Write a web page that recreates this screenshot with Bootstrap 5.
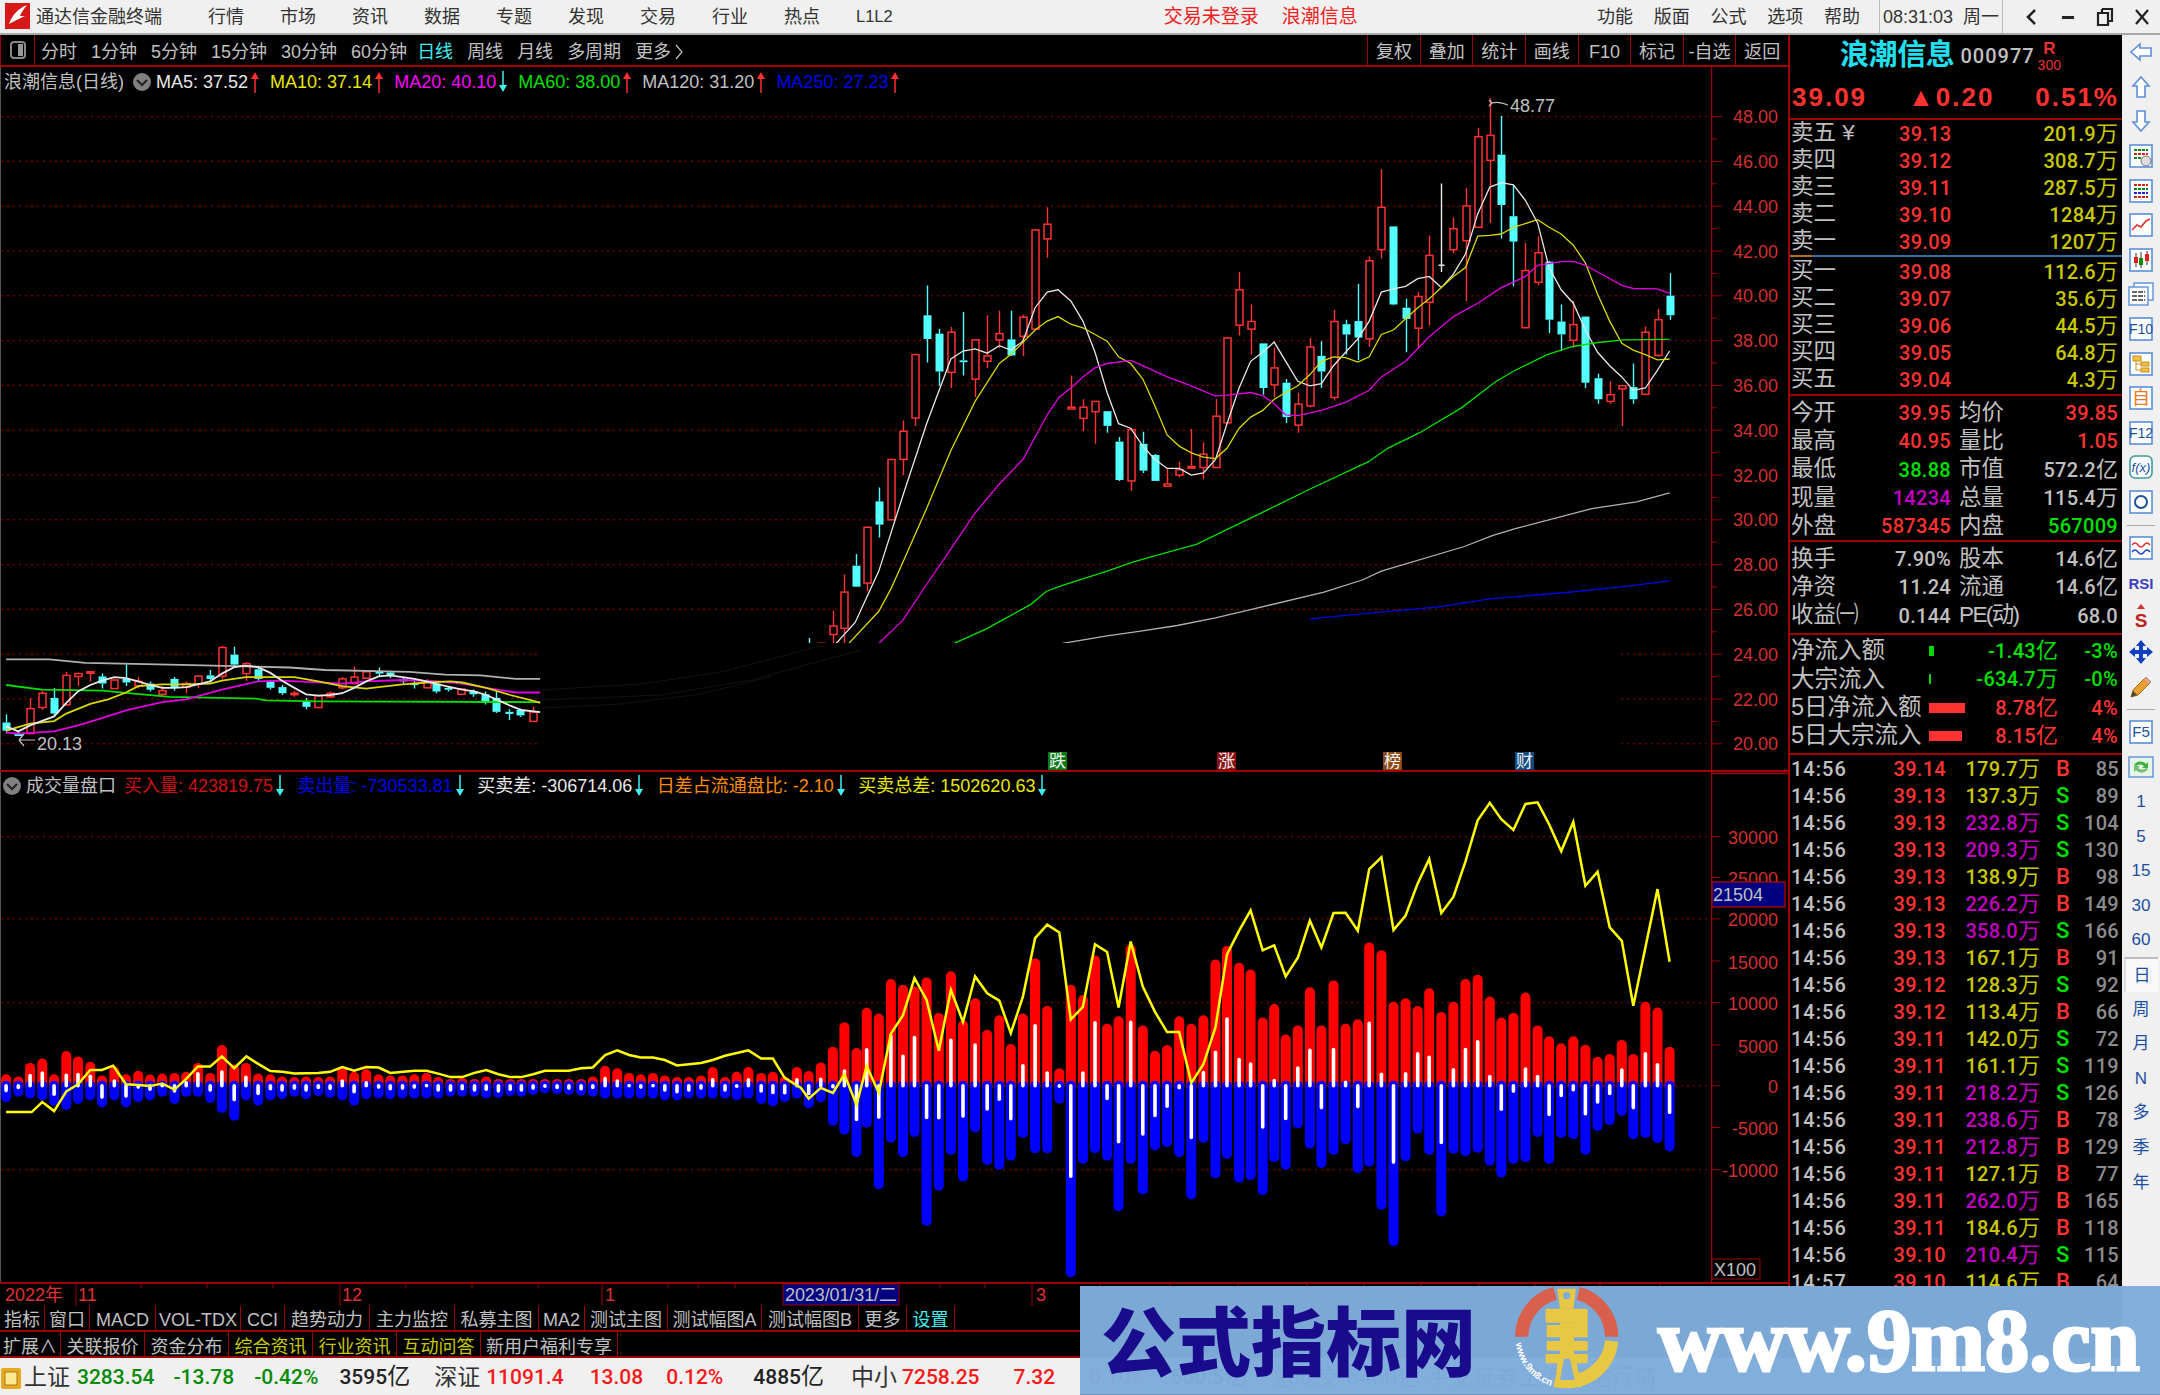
<!DOCTYPE html>
<html lang="zh-CN">
<head>
    <meta charset="UTF-8" />
    <title>通达信金融终端</title>
    <link href="https://cdn.jsdelivr.net/npm/bootstrap@5.3.3/dist/css/bootstrap.min.css" rel="stylesheet" />
    <style>
        body { background: #000; font-family: "Liberation Sans", "Noto Sans CJK SC", sans-serif; font-size: 18px; line-height: 1; color: #c0c0c0; }
        svg { display: block; }
        svg text { font-family: "Liberation Sans", "Noto Sans CJK SC", sans-serif; }

        .titlebar { height: 35px; background: #f0f0f0; border-bottom: 2px solid #a8a8a8; color: #333; flex: none; }
        .appname { margin-left: 6px; }
        .topmenu { margin-left: 46px; gap: 36px; }
        .l1l2 { font-size: 16.5px; }
        .tradeinfo { margin-left: 271px; gap: 23px; color: #f02020; font-size: 19px; }
        .rightmenu { gap: 20.75px; }
        .clockbox { height: 33px; margin-left: 19px; padding: 0 3px; border-left: 1px solid #bbb; border-right: 1px solid #bbb; gap: 10px; }
        .winbox { margin-left: 9px; }
        .winbtn { width: 37px; }

        .mainrow { height: 1323px; flex: none; }
        .chartcol { width: 1788px; flex: none; }
        .toolstrip { height: 32px; border-bottom: 2px solid #a00000; flex: none; }
        .toolicon { width: 35px; height: 30px; border-left: 1px solid #a00000; border-right: 1px solid #a00000; }
        .periods { margin-left: 6px; gap: 14px; padding-top: 3px; }
        .periodcur { margin-left: -4px; }
        .toolcell { width: 52.6px; height: 30px; padding-top: 3px; border-left: 1px solid #a00000; }
        .upperpane { height: 705px; border-bottom: 2px solid #a00000; flex: none; }
        .lowerpane { height: 510px; flex: none; }
        .plotcol { width: 1711px; flex: none; border-left: 1px solid #555; }
        .legend { height: 29px; padding-left: 3px; flex: none; }
        .legend2 { height: 28px; padding-left: 1px; flex: none; }
        .legendtxt { white-space: nowrap; }
        .legendmark { margin: 0 11px 0 3px; flex: none; }
        .legend2 .legendmark { margin-right: 13.5px; }
        .tabrow { height: 26px; border-bottom: 2px solid #a00000; flex: none; }
        .tabcell { height: 24px; padding-top: 3px; border-right: 1px solid #a00000; white-space: nowrap; }
        #tabs2 .tabcell { padding-top: 5px; }

        .quotecol { width: 334px; flex: none; border-left: 2px solid #a00000; }
        .qhead { height: 41px; padding-left: 50px; }
        .qname { color: #20e0f0; font-size: 29px; font-weight: 700; letter-spacing: -.4px; }
        .qcode { margin-left: 6px; font-size: 20px; font-family: Roboto, sans-serif; font-weight: 500; letter-spacing: 1px; }
        .qflag { margin-left: 3px; color: #e83030; font-size: 14px; text-align: center; }
        .qflag b { display: block; font-size: 17px; margin-bottom: 1px; }
        .qprice { height: 44px; padding: 0 3px 0 2px; border-bottom: 2px solid #a00000; color: #ff3232; font-weight: 700; font-size: 26px; letter-spacing: 2px; }
        .qbook { height: 276px; border-bottom: 2px solid #a00000; }
        .qrow { height: 27px; }
        .qnum { font-family: Roboto, sans-serif; font-weight: 500; font-size: 20px; letter-spacing: .3px; white-space: nowrap; }
        .qlabel { font-size: 22.5px; white-space: nowrap; }
        .tightlabel { letter-spacing: -1.6px; }
        .uni { font-family: "Noto Sans CJK SC", sans-serif; font-weight: 400; font-size: 22px; letter-spacing: 0; line-height: 0; }
        .bookmid { height: 2px; margin: 0 0 1px; background: linear-gradient(90deg, #b07020 22px, #2a6fa8 22px); }
        .w108 { width: 108px; flex: none; }
        .w52 { width: 52px; flex: none; }
        .w160 { width: 160px; flex: none; }
        .qstat1 { height: 146px; padding-top: 3px; border-bottom: 2px solid #a00000; }
        .qstat2 { height: 93px; padding-top: 3px; border-bottom: 2px solid #a00000; }
        .qstat3 { height: 120px; padding-top: 2px; border-bottom: 2px solid #a00000; }
        .statrow { height: 28.3px; padding-left: 1px; padding-right: 4px; }
        .statgap { margin-left: 8px; }
        .flowlabel { width: 138px; flex: none; font-size: 23.5px; }
        .flowmid { width: 129px; flex: none; }
        .flowbar { display: block; height: 10px; flex: none; }
        .ticks { overflow: hidden; flex: 1 1 0; min-height: 0; }
        .tickrow { height: 27px; padding-left: 1px; flex: none; }
        .ticktime { width: 60px; flex: none; letter-spacing: 1px; }
        .tickprice { width: 95px; flex: none; }
        .tickvol { width: 94px; flex: none; }
        .tickbs { width: 15px; margin-left: 16px; flex: none; font-size: 22px; font-weight: 500; }
        .tickcnt { flex: 1 1 0; padding-right: 3px; color: #8c8c8c; }
        .bookpad { padding-left: 1px; padding-right: 4px; }

        .sidecol { width: 38px; flex: none; background: #f0f0f0; color: #1c4fa0; font-size: 17px; }
        .sideitem { height: 34.6px; flex: none; }
        .sidesep { height: 11.4px; flex: none; }
        .sidesep i { display: block; width: 28px; height: 1px; background: #aaa; }
        .sidecur { background: #f8f8f8; border-top: 2px solid #bbb; border-left: 2px solid #ddd; margin: 0 2px; }

        .statusbar { height: 37px; padding-top: 2px; background: #f0f0f0; color: #222; flex: none; }
        .st-name { font-size: 23px; color: #333; white-space: nowrap; }
        .st-num { font-family: Roboto, sans-serif; font-weight: 500; font-size: 21px; white-space: nowrap; }
        .st-num .uni { font-size: 23px; }
        .sg5 { margin-left: 5px; }
        .sg6 { margin-left: 6px; }
        .sg7 { margin-left: 7px; }
        .sg19 { margin-left: 19px; }
        .sg20 { margin-left: 20px; }
        .sg21 { margin-left: 21px; }
        .sg23 { margin-left: 23px; }
        .sg24 { margin-left: 24px; }
        .sg26 { margin-left: 26px; }
        .sg27 { margin-left: 27px; }
        .sg30 { margin-left: 30px; }
        .sg34 { margin-left: 34px; }

        .adbanner { position: absolute; left: 1080px; top: 1286px; right: 0; bottom: 0; background: rgba(127, 172, 219, .975); border-bottom: 1px solid #6f95be; }
        .adtitle { margin-left: 21px; margin-bottom: 5px; width: 371px; color: #1a0a8c; font-family: "Noto Sans CJK SC", sans-serif; font-weight: 900; font-size: 75px; white-space: nowrap; }
        .adlogo { margin-left: 8px; flex: none; }
        .adurl { margin-left: -2px; color: #fff; font-family: "Liberation Serif", serif; font-weight: 700; font-size: 88.5px; -webkit-text-stroke: 3px #fff; white-space: nowrap; }

        .c-gray { color: #c0c0c0; }
        .c-white { color: #e8e8e8; }
        .c-yellow { color: #e8e800; }
        .c-olive { color: #c8c800; }
        .c-magenta { color: #ff00ff; }
        .c-purple { color: #c000c0; }
        .c-green { color: #00e000; }
        .c-blue { color: #0000f0; }
        .c-red { color: #ff3232; }
        .c-dred { color: #d01010; }
        .c-orange { color: #ff8c00; }
        .c-cyan { color: #40f0f0; }
        .c-dgreen { color: #058a05; }
        .c-sred { color: #f81818; }
    </style>
</head>
<body class="overflow-hidden">
<div class="d-flex flex-column position-relative vh-100">

    <header class="titlebar d-flex align-items-center">
        <svg width="30" height="33" viewBox="0 0 30 33">
            <rect x="5" y="3" width="25" height="26" fill="#d81818" />
            <path d="M9 24 C12 15 19 8 27 5 C23 10 21 13 20 16 L25 16 C19 19 14 21 9 24Z" fill="#fff" />
        </svg>
        <span class="appname">通达信金融终端</span>
        <div class="topmenu d-flex align-items-center">
            <span>行情</span><span>市场</span><span>资讯</span><span>数据</span><span>专题</span>
            <span>发现</span><span>交易</span><span>行业</span><span>热点</span><span class="l1l2">L1L2</span>
        </div>
        <div class="tradeinfo d-flex"><span>交易未登录</span><span>浪潮信息</span></div>
        <div class="rightmenu d-flex ms-auto"><span>功能</span><span>版面</span><span>公式</span><span>选项</span><span>帮助</span></div>
        <div class="clockbox d-flex align-items-center">
            <span>08:31:03</span><span>周一</span>
        </div>
        <div class="winbox d-flex align-items-center">
            <div class="winbtn d-flex justify-content-center"><svg width="12" height="20"><path d="M10 3 L3 10 L10 17" fill="none" stroke="#222" stroke-width="2.5" /></svg></div>
            <div class="winbtn d-flex justify-content-center"><svg width="14" height="20"><rect x="1" y="9" width="12" height="3" fill="#222" /></svg></div>
            <div class="winbtn d-flex justify-content-center"><svg width="18" height="20"><path d="M6 2h10v12h-3M6 2v3M2 6h10v12H2Z" fill="none" stroke="#222" stroke-width="2.2" /></svg></div>
            <div class="winbtn d-flex justify-content-center"><svg width="16" height="20"><path d="M2 3 L14 17 M14 3 L2 17" stroke="#222" stroke-width="2.2" /></svg></div>
        </div>
    </header>

    <div class="mainrow d-flex">
        <div class="chartcol d-flex flex-column">
            <div class="toolstrip d-flex align-items-center">
                <div class="toolicon d-flex align-items-center justify-content-center">
                    <svg width="16" height="20"><rect x="1" y="2" width="14" height="16" rx="3" fill="none" stroke="#888" stroke-width="2" /><rect x="8" y="4" width="5" height="12" fill="#999" /></svg>
                </div>
                <div class="periods d-flex align-items-center">
                    <span>分时</span><span>1分钟</span><span>5分钟</span><span>15分钟</span><span>30分钟</span><span>60分钟</span>
                    <span class="c-cyan periodcur">日线</span><span>周线</span><span>月线</span><span>多周期</span>
                    <span class="d-flex align-items-center gap-1">更多<svg width="8" height="18"><path d="M1 2 L7 9 L1 16" fill="none" stroke="#c0c0c0" stroke-width="1.2" /></svg></span>
                </div>
                <div class="d-flex ms-auto" id="toolcells"></div>
            </div>

            <div class="upperpane d-flex">
                <div class="plotcol d-flex flex-column">
                    <div class="legend d-flex align-items-center" id="legendTop"></div>
                    <svg id="priceChart" width="1710" height="674" viewBox="0 96 1710 674"></svg>
                </div>
                <svg id="priceAxis" width="77" height="703" viewBox="1711 67 77 703"></svg>
            </div>

            <div class="lowerpane d-flex">
                <div class="plotcol d-flex flex-column">
                    <div class="legend2 d-flex align-items-center" id="legendLow"></div>
                    <svg id="flowChart" width="1710" height="482" viewBox="0 800 1710 482"></svg>
                </div>
                <svg id="flowAxis" width="77" height="510" viewBox="1711 772 77 510"></svg>
            </div>

            <svg id="dateAxis" class="flex-none" width="1788" height="24" viewBox="0 1282 1788 24"></svg>
            <div class="tabrow d-flex" id="tabs1"></div>
            <div class="tabrow d-flex" id="tabs2"></div>
        </div>

        <div class="quotecol d-flex flex-column">
            <div class="qhead d-flex align-items-center">
                <span class="qname">浪潮信息</span><span class="qcode">000977</span>
                <div class="qflag"><b>R</b>300</div>
            </div>
            <div class="qprice d-flex align-items-center justify-content-between">
                <span>39.09</span><span>▲0.20</span><span>0.51%</span>
            </div>
            <div class="qbook" id="orderBook"></div>
            <div class="qstat1" id="stat1"></div>
            <div class="qstat2" id="stat2"></div>
            <div class="qstat3" id="stat3"></div>
            <div class="ticks d-flex flex-column" id="ticks"></div>
        </div>

        <div class="sidecol d-flex flex-column" id="sidebar"></div>
    </div>

    <div class="statusbar d-flex align-items-center">
        <svg class="flex-none" width="24" height="24"><rect x="1" y="2" width="20" height="21" rx="2" fill="#e8a820" /><rect x="5" y="6" width="12" height="13" fill="#fbe890" stroke="#b07810" /></svg>
        <span class="st-name">上证</span>
        <span class="st-num c-dgreen sg7">3283.54</span>
        <span class="st-num c-dgreen sg19">-13.78</span>
        <span class="st-num c-dgreen sg20">-0.42%</span>
        <span class="st-num sg21">3595<span class="uni">亿</span></span>
        <span class="st-name sg24">深证</span>
        <span class="st-num c-sred sg6">11091.4</span>
        <span class="st-num c-sred sg26">13.08</span>
        <span class="st-num c-sred sg23">0.12%</span>
        <span class="st-num sg30">4885<span class="uni">亿</span></span>
        <span class="st-name sg27">中小</span>
        <span class="st-num c-sred sg5">7258.25</span>
        <span class="st-num c-sred sg34">7.32</span>
        <span class="st-num c-sred sg34">0.10%</span>
        <span class="st-num sg24">550.5<span class="uni">亿</span></span>
        <span class="st-name sg24">总成交 6460亿 平安证券上海主站行情</span>
    </div>

    <div class="adbanner d-flex align-items-center">
        <div class="adtitle">公式指标网</div>
        <svg class="adlogo" width="180" height="109" viewBox="0 18 540 327">
            <g fill="none" stroke-width="40">
                <path d="M225 40 A135 135 0 0 0 125 170" stroke="#d9604c" />
                <path d="M295 40 A135 135 0 0 1 395 170" stroke="#d9604c" />
                <path d="M395 183 A135 135 0 0 1 225 300" stroke="#e8c842" />
            </g>
            <g fill="#e8c842">
                <path d="M232 26 H288 L280 86 H240Z" />
                <path d="M197 86 H323 V172 H282 V128 H240 V172 H200 V135 H240 V128 H197Z" />
                <rect x="200" y="183" width="123" height="29" />
                <path d="M197 222 H323 V250 H290 L305 322 H225 L232 250 H197Z" />
                <rect x="240" y="128" width="42" height="94" />
            </g>
            <circle cx="260" cy="47" r="11" fill="#7facdb" />
            <path d="M252 236 H270 L284 300 H240Z" fill="#7facdb" />
            <defs><path id="logoArc" d="M108 190 A152 152 0 0 0 222 320" /></defs>
            <text font-size="29" font-weight="700" fill="#fff"><textPath href="#logoArc">www.9m8.cn</textPath></text>
        </svg>
        <div class="adurl">www.9m8.cn</div>
    </div>
</div>

<script>
    const RED = "#ff3232", CYAN = "#54ffff", GRID = "#a00000";

    // ---- header bits ----
    const arrow = (dir) => {
        const c = dir > 0 ? "#ff3030" : "#40f0f0";
        return dir > 0
            ? `<svg class="legendmark" width="8" height="22"><path d="M4 6V22" stroke="${c}" stroke-width="1.5"/><path d="M0 8 L4 1 L8 8Z" fill="${c}"/></svg>`
            : `<svg class="legendmark" width="8" height="22"><path d="M4 0V16" stroke="${c}" stroke-width="1.5"/><path d="M0 14 L4 21 L8 14Z" fill="${c}"/></svg>`;
    };
    const chevron = `<svg class="flex-none" width="20" height="20"><circle cx="10" cy="10" r="9" fill="#808080"/><path d="M5 8 L10 13 L15 8" fill="none" stroke="#222" stroke-width="2"/></svg>`;

    document.getElementById("legendTop").innerHTML =
        `<span class="c-gray legendtxt me-2">浪潮信息(日线)</span>${chevron}<span class="ms-1"></span>` +
        [["MA5: 37.52", "c-white", 1], ["MA10: 37.14", "c-yellow", 1], ["MA20: 40.10", "c-magenta", -1],
         ["MA60: 38.00", "c-green", 1], ["MA120: 31.20", "c-gray", 1], ["MA250: 27.23", "c-blue", 1]]
            .map(([t, c, d]) => `<span class="legendtxt ${c}">${t}</span>${arrow(d)}`).join("");

    document.getElementById("legendLow").innerHTML =
        `${chevron}<span class="c-gray legendtxt ms-1 me-2">成交量盘口</span>` +
        [["买入量: 423819.75", "c-dred"], ["卖出量: -730533.81", "c-blue"], ["买卖差: -306714.06", "c-white"],
         ["日差占流通盘比: -2.10", "c-orange"], ["买卖总差: 1502620.63", "c-yellow"]]
            .map(([t, c]) => `<span class="legendtxt ${c}">${t}</span>${arrow(-1)}`).join("");

    document.getElementById("toolcells").innerHTML = ["复权", "叠加", "统计", "画线", "F10", "标记", "-自选", "返回"]
        .map((t) => `<div class="toolcell d-flex align-items-center justify-content-center">${t}</div>`).join("");

    // ---- price chart ----
    const rx = (v) => 800 + v / 1.568, ry = (v) => 80 + v / 2.24;     // right block, read from the chart
    const lx = (v) => v / 1.96, ly = (v) => 620 + v / 2.8;            // left block

    // x, wick top, body top, body bottom, wick bottom, up?
    const rightCandles = [
        [12,1250,1262,1262,1262,0],[31,1260,1262,1262,1262,1],[50,1188,1223,1242,1262,1],[68,1108,1147,1228,1262,1],
        [87,1062,1088,1135,1135,0],[103,1000,1002,1127,1145,1],[122,913,944,996,1025,0],[141,850,850,985,985,1],
        [160,763,787,850,885,1],[178,615,615,757,775,1],[197,460,527,580,633,0],[216,558,568,653,685,0],
        [235,553,565,655,690,1],[254,520,628,632,662,0],[273,581,582,670,710,1],[292,527,618,630,645,1],
        [311,517,568,582,600,1],[329,517,581,617,618,0],[348,525,531,574,618,1],[367,335,336,558,560,1],
        [386,285,323,356,398,1],[423,662,733,737,737,1],[442,715,733,758,787,1],[461,720,720,743,815,1],
        [480,742,742,775,790,0],[498,800,810,896,898,0],[517,780,783,898,920,1],[536,788,815,875,880,0],
        [555,838,840,898,898,0],[574,870,905,910,912,1],[593,855,873,885,890,1],[612,782,866,868,868,1],
        [631,812,838,868,895,1],[650,715,753,868,868,1],[668,577,578,768,770,1],[687,430,470,549,572,1],
        [705,503,541,558,615,1],[724,590,590,690,705,0],[742,600,645,683,710,1],[760,670,678,755,768,0],
        [779,700,726,773,790,1],[798,578,598,730,733,1],[816,585,618,653,690,0],[835,515,541,711,718,1],
        [854,537,547,570,615,0],[873,457,540,577,627,0],[891,395,405,580,597,1],[910,200,285,380,400,1],
        [929,328,328,503,505,0],[948,490,510,535,610,0],[967,475,485,556,600,1],[985,348,393,498,550,1],
        [1023,308,333,380,388,1],[1042,242,282,360,495,1],[1061,107,127,330,330,1],[1080,40,124,180,320,1],
        [1098,80,167,280,355,0],[1117,235,305,362,462,0],[1136,365,427,555,555,1],[1155,350,387,453,460,1],
        [1173,405,407,537,567,0],[1192,503,541,570,607,0],[1211,495,548,583,600,1],[1230,530,530,678,690,0],
        [1249,658,668,715,725,0],[1268,675,705,720,725,1],[1287,683,685,692,775,1],[1305,635,688,715,725,0],
        [1324,552,565,704,705,1],[1343,513,537,617,620,1],[1362,433,483,527,537,0]
    ];
    const leftCandles = [
        [10,265,287,310,318,0],[34,312,316,325,325,0],[57,218,248,318,318,1],[81,198,205,245,252,1],[104,190,218,262,270,0],
        [128,145,155,237,240,1],[151,147,150,158,185,1],[175,143,145,148,172,1],[198,150,158,178,192,0],[222,165,168,192,192,1],
        [245,125,165,175,185,0],[269,160,172,185,192,1],[292,172,178,195,200,0],[316,185,198,208,215,1],[340,160,165,190,198,0],
        [363,172,178,188,205,1],[386,155,157,180,190,1],[410,140,155,165,175,0],[433,72,77,157,165,1],[457,75,97,125,128,0],
        [480,118,122,150,170,1],[504,130,138,165,170,0],[528,168,170,190,195,0],[551,182,188,205,210,0],[575,198,205,208,215,1],
        [598,218,228,243,250,0],[622,210,212,245,247,1],[645,200,205,215,218,1],[669,160,165,190,195,1],[692,130,160,178,180,1],
        [716,140,145,163,165,1],[740,133,145,150,160,0],[763,143,147,157,162,0],[787,160,165,172,178,0],[810,170,178,180,192,0],
        [834,165,172,190,192,1],[853,172,178,200,205,0],[877,185,190,195,200,0],[901,190,193,208,208,1],[925,195,200,208,215,0],
        [948,200,208,232,237,0],[971,200,218,257,260,0],[995,250,257,263,280,0],[1018,248,252,267,272,0],[1042,243,258,284,285,1]
    ];

    const maRight = [
        ["#e8e8e8", "55,1262 85,1215 122,1100 160,930 197,770 235,625 254,607 273,602 292,612 311,595 329,605 348,585 367,510 386,475 403,470 423,495 442,540 461,610 480,700 498,770 517,780 536,820 555,850 574,870 593,870 612,885 631,880 650,850 668,770 687,690 705,630 724,610 742,587 760,630 779,675 798,685 816,680 835,640 854,610 873,580 891,540 910,475 929,468 948,462 967,445 985,440 1004,465 1023,435 1042,390 1061,300 1080,240 1098,230 1117,235 1136,270 1155,320 1173,420 1192,470 1211,500 1230,560 1249,610 1268,640 1287,665 1305,695 1324,690 1343,650 1362,607"],
        ["#d8d800", "75,1262 122,1190 141,1140 160,1080 197,960 235,830 273,720 311,635 329,615 367,560 386,540 403,530 423,547 442,555 461,570 480,585 498,620 517,635 536,670 555,730 574,795 593,820 612,835 631,845 650,848 668,825 687,780 705,755 724,740 742,715 760,700 779,685 798,660 816,630 835,620 854,622 873,632 891,620 910,570 929,560 948,535 967,510 985,490 1004,465 1023,440 1042,420 1061,350 1080,348 1098,345 1117,330 1155,313 1173,330 1192,345 1211,370 1230,410 1249,480 1268,540 1287,590 1305,605 1324,615 1343,627 1362,625"],
        ["#e000e0", "122,1262 160,1210 197,1130 235,1050 273,970 311,905 348,850 386,750 405,710 423,690 442,665 461,645 480,635 517,628 536,640 574,665 612,685 650,708 668,706 705,700 724,707 742,725 760,750 779,752 816,740 854,722 891,695 910,665 948,630 985,575 1023,530 1061,500 1098,465 1136,440 1155,415 1192,407 1211,406 1230,415 1249,430 1287,460 1305,467 1343,468 1362,478"],
        ["#00e000", "240,1262 290,1230 360,1175 385,1145 410,1132 480,1100 520,1080 570,1060 620,1040 700,985 750,950 800,915 890,855 920,825 970,790 1035,735 1090,675 1120,650 1170,615 1210,597 1250,588 1290,582 1362,581"],
        ["#b0b0b0", "410,1262 480,1245 530,1235 590,1222 650,1205 700,1188 820,1147 880,1120 910,1100 1040,1045 1085,1020 1120,1005 1240,960 1310,945 1362,925"],
        ["#0000e8", "798,1207 870,1197 1000,1180 1080,1162 1200,1148 1300,1133 1362,1122"]
    ];
    const maLeft = [
        ["#b0b0b0", "10,110 95,110 165,120 330,125 565,133 635,140 800,145 870,153 940,155 1010,165 1057,165"],
        ["#00e000", "10,182 80,195 200,198 250,205 330,215 500,220 520,225 620,228 1057,230"],
        ["#e000e0", "10,315 34,318 104,312 151,295 198,275 245,253 316,230 363,222 433,195 504,172 551,170 669,178 716,172 787,168 857,172 904,178 951,190 1010,203 1057,203"],
        ["#d8d800", "10,310 57,290 104,283 128,262 175,235 210,222 245,203 269,185 316,180 363,180 410,178 433,170 480,160 575,160 622,172 669,185 716,192 740,188 787,180 834,175 881,172 904,175 951,190 998,210 1040,225 1057,232"],
        ["#e8e8e8", "10,298 34,312 57,295 104,270 128,232 151,200 175,182 198,170 222,160 245,163 269,172 292,182 316,190 340,190 363,188 410,172 433,150 457,132 480,128 504,132 528,148 551,170 575,190 598,208 622,212 645,210 669,205 692,190 716,172 740,158 763,155 787,160 810,165 834,172 857,180 881,188 904,195 928,200 951,210 975,225 998,240 1020,252 1057,258"]
    ];

    const mapPts = (str, fx, fy) => str.split(" ").map((p) => {
        const [a, b] = p.split(",").map(Number);
        return `${fx(a).toFixed(1)},${fy(b).toFixed(1)}`;
    }).join(" ");

    function drawCandle([x, wt, bt, bb, wb, up], fx, fy) {
        const cx = Math.round(fx(x)) + 0.5, c = up ? RED : CYAN;
        const t = fy(bt), h = Math.max(fy(bb) - t, 1.5);
        let s = `<path d="M${cx} ${fy(wt).toFixed(1)}V${t.toFixed(1)}M${cx} ${(t + h).toFixed(1)}V${fy(wb).toFixed(1)}" stroke="${c}" stroke-width="1.4"/>`;
        s += up
            ? `<rect x="${cx - 3.5}" y="${t.toFixed(1)}" width="7" height="${h.toFixed(1)}" fill="#000" stroke="${c}" stroke-width="1.5"/>`
            : `<rect x="${cx - 4}" y="${t.toFixed(1)}" width="8" height="${h.toFixed(1)}" fill="${c}"/>`;
        return s;
    }

    let price = `<defs><clipPath id="clipR"><rect x="780" y="90" width="900" height="553"/></clipPath>
        <clipPath id="clipL"><rect x="0" y="640" width="539.5" height="120"/></clipPath></defs>`;
    const priceY = (p) => 116.6 + (48 - p) * 22.4;
    for (let p = 48; p >= 20; p -= 2) {
        const y = priceY(p).toFixed(1);
        const segs = p >= 26 ? [[0, 1710]] : [[0, 540], [1620, 1710]];
        segs.forEach(([a, b]) => { price += `<line x1="${a}" x2="${b}" y1="${y}" y2="${y}" stroke="${GRID}" stroke-dasharray="2 4"/>`; });
    }
    // the blanked out stretch still shows a trace of the lines
    price += `<g fill="none" stroke="#121212"><polyline points="540,690 640,684 720,672 812,648"/><polyline points="540,700 660,695 750,680 860,650"/><polyline points="540,708 620,704 700,694 772,676"/></g>`;
    price += `<g clip-path="url(#clipR)">` + rightCandles.map((c) => drawCandle(c, rx, ry)).join("");
    price += `<path d="M${Math.round(rx(1004))+.5} ${ry(232)}V${ry(430)}M${Math.round(rx(1004))-2.5} ${ry(415)}h6" stroke="#e8e8e8" stroke-width="1.4"/>`;
    price += maRight.map(([c, p]) => `<polyline points="${mapPts(p, rx, ry)}" fill="none" stroke="${c}" stroke-width="1.3"/>`).join("") + `</g>`;
    price += `<g clip-path="url(#clipL)">` + leftCandles.map((c) => drawCandle(c, lx, ly)).join("");
    price += maLeft.map(([c, p]) => `<polyline points="${mapPts(p, lx, ly)}" fill="none" stroke="${c}" stroke-width="1.8"/>`).join("") + `</g>`;
    price += `<path d="M1491 103 l-3 -3 m3 3 l-3 3 M1491 103 q7 -2 16 2" fill="none" stroke="#c0c0c0" stroke-width="1.2"/>`;
    price += `<text x="1509" y="112" font-size="18" fill="#c0c0c0">48.77</text>`;
    price += `<path d="M18 740 h16 M18 740 l5 -6 M18 740 l5 6" fill="none" stroke="#c0c0c0" stroke-width="1.2"/>`;
    price += `<text x="36" y="750" font-size="18" fill="#c0c0c0">20.13</text>`;
    [["跌", 1047, "#0a7a16"], ["涨", 1216, "#8a1010"], ["榜", 1382, "#8a4a14"], ["财", 1514, "#104a80"]].forEach(([t, x, c]) => {
        price += `<rect x="${x}" y="752" width="19" height="18" fill="${c}"/><text x="${x + 1}" y="767" font-size="17" fill="#f0f0f0">${t}</text>`;
    });
    price += `<path d="M1669 73 l7 7 -7 7 -7 -7Z" fill="none" stroke="#888"/>
        <rect x="1690" y="73" width="13" height="15" rx="2" fill="none" stroke="#888" stroke-width="1.5"/><rect x="1696" y="75" width="5" height="11" fill="#999"/>`;
    document.getElementById("priceChart").innerHTML = price;

    let paxis = `<line x1="1711.5" x2="1711.5" y1="67" y2="770" stroke="${GRID}" stroke-width="1.5"/>`;
    for (let p = 48; p >= 20; p--) {
        const y = priceY(p).toFixed(1), major = p % 2 === 0;
        paxis += `<line x1="1711" x2="${major ? 1722 : 1717}" y1="${y}" y2="${y}" stroke="${GRID}"/>`;
        if (major) paxis += `<text x="1778" y="${+y + 6.5}" text-anchor="end" font-size="18" fill="#d03030">${p}.00</text>`;
    }
    document.getElementById("priceAxis").innerHTML = paxis;

    // ---- buy / sell bars ----
    const fx2 = (v) => 800 + v / 1.568, fy2 = (v) => 760 + v / 2.958;
    const rightBars = [
        [12,920,1030],[31,895,1013],[50,848,1082],[68,776,1108],[87,852,1175],[103,733,1088],[122,750,1270],[141,648,1132],
        [160,665,1175],[178,670,1115],[197,643,1378],[216,748,1274],[235,625,1168],[254,770,1247],[273,705,1102],[292,798,1198],
        [311,755,1212],[329,840,1185],[348,750,1118],[367,587,1163],[386,727,1163],[405,912,1017],[423,665,1530],[442,695,1195],
        [461,578,1163],[480,780,1185],[498,758,1335],[517,545,1195],[536,785,1285],[555,860,1155],[574,843,1145],[593,758,1175],
        [612,780,1300],[631,755,1133],[650,590,1238],[668,550,1180],[687,600,1250],[705,620,1243],[724,762,1287],[742,722,1190],
        [760,812,1212],[779,785,1090],[798,672,1150],[816,785,1207],[835,652,1168],[854,780,1137],[873,767,1222],[891,540,1203],
        [910,563,1330],[929,715,1438],[948,705,1187],[967,728,1105],[985,675,1168],[1004,745,1350],[1023,715,1165],[1042,648,1172],
        [1061,635,1162],[1080,700,1200],[1098,762,1235],[1117,748,1195],[1136,688,1190],[1155,785,1115],[1173,817,1195],[1192,838,1118],
        [1211,817,1122],[1230,842,1168],[1249,878,1097],[1268,870,1080],[1287,828,1053],[1305,870,1122],[1324,715,1118],[1343,732,1133],[1362,848,1158]
    ];
    const leftBars = [
        [10,1272,1350],[34,1278,1335],[57,1240,1340],[81,1228,1345],[104,1272,1360],[128,1207,1372],[151,1222,1355],[175,1237,1345],
        [198,1275,1365],[222,1250,1345],[245,1272,1365],[269,1262,1350],[292,1273,1345],[316,1270,1335],[340,1268,1355],[363,1265,1335],
        [386,1240,1335],[410,1268,1352],[433,1190,1380],[457,1245,1402],[480,1240,1345],[504,1270,1360],[528,1272,1345],[551,1278,1342],
        [575,1280,1335],[598,1278,1342],[622,1280,1333],[645,1278,1338],[669,1250,1345],[692,1265,1360],[716,1258,1342],[740,1272,1340],
        [763,1275,1342],[787,1275,1340],[810,1272,1340],[834,1268,1340],[857,1280,1340],[881,1285,1335],[904,1282,1335],[928,1285,1335],
        [951,1278,1340],[975,1285,1338],[998,1285,1333],[1020,1285,1335],[1043,1285,1330],[1066,1285,1325],[1090,1285,1328],[1113,1285,1330],
        [1137,1285,1332],[1160,1278,1335],[1184,1248,1340],[1208,1255,1340],[1231,1268,1340],[1254,1272,1340],[1278,1268,1340],[1301,1275,1345],
        [1325,1280,1345],[1348,1280,1340],[1372,1275,1340],[1395,1252,1340],[1419,1280,1340],[1442,1265,1345],[1465,1252,1340],[1490,1268,1355],
        [1513,1265,1362],[1536,1278,1350],[1560,1252,1340]
    ];
    const zero = 1085.8;
    const bars = [
        ...leftBars.map(([x, r, b]) => [lx(x), ly(r), ly(b)]),
        ...rightBars.map(([x, r, b]) => [fx2(x), fy2(r), fy2(b)])
    ];
    let flow = "";
    [836.7, 918.9, 1002.7, 1085.8, 1169.7].forEach((y) => {
        flow += `<line x1="0" x2="1710" y1="${y}" y2="${y}" stroke="${GRID}" stroke-dasharray="2 4"/>`;
    });
    const bar = (x, y1, y2, c, w) => `<line x1="${x.toFixed(1)}" x2="${x.toFixed(1)}" y1="${y1.toFixed(1)}" y2="${y2.toFixed(1)}" stroke="${c}" stroke-width="${w}" stroke-linecap="round"/>`;
    bars.forEach(([x, r]) => { flow += bar(x, zero, Math.min(r + 5, zero), "#ff0000", 10); });
    bars.forEach(([x, r, b]) => { flow += bar(x, zero, Math.max(b - 5, zero), "#0000ff", 10); });
    bars.forEach(([x, r, b]) => {
        const d = (zero - r) - (b - zero);   // white bar is buy minus sell
        flow += bar(x, zero, zero - d, "#ffffff", 3.6);
    });
    const yellowL = "10,1378 60,1378 81,1350 104,1375 128,1320 151,1300 175,1260 198,1260 220,1248 245,1300 269,1302 292,1305 316,1298 340,1315 363,1285 386,1250 410,1250 433,1222 457,1255 481,1222 504,1243 528,1263 551,1265 575,1270 622,1268 645,1265 669,1252 692,1262 716,1252 740,1253 763,1268 810,1262 834,1262 857,1270 881,1280 904,1280 928,1268 951,1260 975,1272 998,1280 1020,1280 1043,1272 1066,1262 1113,1262 1137,1255 1160,1253 1184,1218 1208,1205 1231,1218 1254,1225 1278,1225 1301,1232 1325,1247 1372,1240 1395,1232 1419,1220 1465,1205 1490,1228 1513,1228 1536,1282 1568,1310";
    const yellowR = "12,1002 31,970 50,985 68,930 87,1020 103,905 122,985 141,810 160,755 178,645 197,710 216,860 235,680 254,775 273,640 292,690 311,712 329,808 348,700 367,527 386,487 405,510 423,768 442,730 461,545 480,568 498,732 517,537 536,670 555,745 574,805 593,805 612,955 631,900 650,790 668,575 687,505 705,445 724,563 742,548 760,640 779,585 798,475 816,555 835,453 854,452 873,505 891,323 910,288 929,503 948,460 967,365 985,293 1004,453 1023,405 1042,300 1061,178 1080,127 1098,175 1117,207 1136,130 1155,125 1173,190 1192,270 1211,183 1230,372 1249,330 1268,495 1287,535 1305,727 1324,555 1343,382 1362,597";
    flow += `<polyline points="${mapPts(yellowL, lx, ly)} ${mapPts(yellowR, fx2, fy2)}" fill="none" stroke="#ffff00" stroke-width="2.5"/>`;
    document.getElementById("flowChart").innerHTML = flow;

    let faxis = `<line x1="1711.5" x2="1711.5" y1="772" y2="1282" stroke="${GRID}" stroke-width="1.5"/><line x1="1711" x2="1788" y1="773.5" y2="773.5" stroke="${GRID}" stroke-width="1.5"/>`;
    [[30000, 836.7], [25000, 877.5], [20000, 918.9], [15000, 961], [10000, 1002.7], [5000, 1045], [0, 1085.8], [-5000, 1127.5], [-10000, 1169.7]].forEach(([v, y]) => {
        faxis += `<line x1="1711" x2="1720" y1="${y}" y2="${y}" stroke="${GRID}"/>`;
        faxis += `<text x="1778" y="${y + 7.5}" text-anchor="end" font-size="18" fill="#d03030">${v}</text>`;
    });
    faxis += `<rect x="1712" y="882" width="73" height="25" fill="#000080" stroke="${GRID}" stroke-width="1.5"/><text x="1713" y="901" font-size="18" fill="#c0c0c0">21504</text>`;
    faxis += `<rect x="1712" y="1259" width="48" height="20" fill="#000" stroke="${GRID}"/><text x="1714" y="1276" font-size="18" fill="#c0c0c0">X100</text>`;
    document.getElementById("flowAxis").innerHTML = faxis;

    // ---- date axis ----
    let dates = `<line x1="0" x2="1788" y1="1283" y2="1283" stroke="${GRID}" stroke-width="2"/>`;
    [141, 207, 273, 406, 472, 538, 668, 698, 735, 940, 985, 1100, 1170, 1238, 1307, 1364, 1421, 1479, 1535, 1600, 1660].forEach((x) => {
        dates += `<line x1="${x}" x2="${x}" y1="1284" y2="1288" stroke="${GRID}"/>`;
    });
    [76, 340, 602, 1032].forEach((x) => { dates += `<line x1="${x}" x2="${x}" y1="1284" y2="1306" stroke="${GRID}"/>`; });
    [["2022年", 5], ["11", 78], ["12", 342], ["1", 605], ["3", 1036]].forEach(([t, x]) => {
        dates += `<text x="${x}" y="1301" font-size="18" fill="#e03030">${t}</text>`;
    });
    dates += `<rect x="783" y="1284" width="116" height="21" fill="#000080" stroke="${GRID}"/><text x="785" y="1301" font-size="18" fill="#c0c0c0" textLength="112">2023/01/31/二</text>`;
    document.getElementById("dateAxis").innerHTML = dates;

    // ---- bottom tabs ----
    const tabRow = (id, items) => {
        document.getElementById(id).innerHTML = items.map(([t, w, c]) =>
            `<div class="tabcell d-flex align-items-center justify-content-center flex-none ${c || ""}" style="width:${w}px">${t}</div>`).join("");
    };
    tabRow("tabs1", [["指标", 45], ["窗口", 45], ["MACD", 66], ["VOL-TDX", 85], ["CCI", 44], ["趋势动力", 85], ["主力监控", 85], ["私募主图", 84], ["MA2", 46], ["测试主图", 83], ["测试幅图A", 94], ["测试幅图B", 97], ["更多", 48], ["设置", 48, "c-cyan"]]);
    tabRow("tabs2", [["扩展∧", 61], ["关联报价", 84], ["资金分布", 84], ["综合资讯", 84, "c-olive"], ["行业资讯", 84, "c-olive"], ["互动问答", 84, "c-olive"], ["新用户福利专享", 137]]);

    // ---- quote panel ----
    const unit = (s) => s.replace(/(万|亿)/, '<span class="uni">$1</span>');
    const bookRow = (label, p, v) => `<div class="qrow bookpad d-flex align-items-center">
        <span class="qlabel w108">${label}</span><span class="qnum w52 text-end c-red">${p}</span><span class="qnum flex-grow-1 text-end c-olive">${unit(v)}</span></div>`;
    document.getElementById("orderBook").innerHTML =
        [["卖五 ¥", "39.13", "201.9万"], ["卖四", "39.12", "308.7万"], ["卖三", "39.11", "287.5万"], ["卖二", "39.10", "1284万"], ["卖一", "39.09", "1207万"]].map((r) => bookRow(...r)).join("") +
        `<div class="bookmid"></div>` +
        [["买一", "39.08", "112.6万"], ["买二", "39.07", "35.6万"], ["买三", "39.06", "44.5万"], ["买四", "39.05", "64.8万"], ["买五", "39.04", "4.3万"]].map((r) => bookRow(...r)).join("");

    const statRow = ([a, av, ac, b, bv, bc]) => `<div class="statrow d-flex align-items-center">
        <div class="w160 d-flex justify-content-between align-items-center"><span class="qlabel">${a}</span><span class="qnum ${ac}">${unit(av)}</span></div>
        <div class="statgap flex-grow-1 d-flex justify-content-between align-items-center"><span class="qlabel">${b}</span><span class="qnum ${bc}">${unit(bv)}</span></div></div>`;
    document.getElementById("stat1").innerHTML = [
        ["今开", "39.95", "c-red", "均价", "39.85", "c-red"],
        ["最高", "40.95", "c-red", "量比", "1.05", "c-red"],
        ["最低", "38.88", "c-green", "市值", "572.2亿", "c-gray"],
        ["现量", "14234", "c-purple", "总量", "115.4万", "c-gray"],
        ["外盘", "587345", "c-red", "内盘", "567009", "c-green"]
    ].map(statRow).join("");
    document.getElementById("stat2").innerHTML = [
        ["换手", "7.90%", "c-gray", "股本", "14.6亿", "c-gray"],
        ["净资", "11.24", "c-gray", "流通", "14.6亿", "c-gray"],
        ["收益㈠", "0.144", "c-gray", `<span class="tightlabel">PE(动)</span>`, "68.0", "c-gray"]
    ].map(statRow).join("");
    document.getElementById("stat3").innerHTML = [
        ["净流入额", 5, "-1.43亿", "-3%", "c-green", "#00d800"],
        ["大宗流入", 2, "-634.7万", "-0%", "c-green", "#00d800"],
        ["5日净流入额", 36, "8.78亿", "4%", "c-red", "#ff3232"],
        ["5日大宗流入", 33, "8.15亿", "4%", "c-red", "#ff3232"]
    ].map(([t, w, v, pct, c, hex]) => `<div class="statrow d-flex align-items-center">
        <span class="qlabel flowlabel">${t}</span>
        <div class="flowmid d-flex align-items-center justify-content-between">
            <span class="flowbar" style="width:${w}px;background:${hex}"></span><span class="qnum ${c}">${unit(v)}</span>
        </div>
        <span class="qnum flex-grow-1 text-end ${c}">${pct}</span></div>`).join("");

    const ticks = [
        ["14:56", "39.14", "179.7", "B", 85], ["14:56", "39.13", "137.3", "S", 89], ["14:56", "39.13", "232.8", "S", 104],
        ["14:56", "39.13", "209.3", "S", 130], ["14:56", "39.13", "138.9", "B", 98], ["14:56", "39.13", "226.2", "B", 149],
        ["14:56", "39.13", "358.0", "S", 166], ["14:56", "39.13", "167.1", "B", 91], ["14:56", "39.12", "128.3", "S", 92],
        ["14:56", "39.12", "113.4", "B", 66], ["14:56", "39.11", "142.0", "S", 72], ["14:56", "39.11", "161.1", "S", 119],
        ["14:56", "39.11", "218.2", "S", 126], ["14:56", "39.11", "238.6", "B", 78], ["14:56", "39.11", "212.8", "B", 129],
        ["14:56", "39.11", "127.1", "B", 77], ["14:56", "39.11", "262.0", "B", 165], ["14:56", "39.11", "184.6", "B", 118],
        ["14:56", "39.10", "210.4", "S", 115], ["14:57", "39.10", "114.6", "B", 64]
    ];
    document.getElementById("ticks").innerHTML = ticks.map(([t, p, v, side, n]) => `<div class="tickrow d-flex align-items-center qnum">
        <span class="ticktime">${t}</span><span class="tickprice text-end c-red">${p}</span>
        <span class="tickvol text-end ${+v > 200 ? "c-purple" : "c-olive"}">${v}<span class="uni">万</span></span>
        <span class="tickbs ${side === "B" ? "c-red" : "c-green"}">${side}</span><span class="tickcnt text-end">${n}</span></div>`).join("");

    // ---- right hand icon strip ----
    const frame = (inner) => `<svg width="24" height="24"><rect x="1" y="1" width="22" height="22" fill="#fff" stroke="#5b8fd9" stroke-width="1.6"/>${inner}</svg>`;
    const ftext = (t, fs, c) => `<text x="12" y="${12 + fs * 0.36}" text-anchor="middle" font-size="${fs}" fill="${c}">${t}</text>`;
    const hatch = (colors) => colors.map((c, i) => `<path d="M5 ${6 + i * 4}h14" stroke="${c}" stroke-width="2" stroke-dasharray="3 1"/>`).join("");
    const sideHtml = [
        `<svg width="24" height="20"><path d="M2 10 L11 2 V6 H22 V14 H11 V18Z" fill="#fff" stroke="#5b8fd9" stroke-width="1.6"/></svg>`,
        `<svg width="20" height="24"><path d="M10 2 L18 11 H14 V22 H6 V11 H2Z" fill="#fff" stroke="#5b8fd9" stroke-width="1.6"/></svg>`,
        `<svg width="20" height="24"><path d="M10 22 L18 13 H14 V2 H6 V13 H2Z" fill="#fff" stroke="#5b8fd9" stroke-width="1.6"/></svg>`,
        frame(hatch(["#0a8a0a", "#d02020", "#0a8a0a"]) + `<circle cx="17" cy="17" r="5" fill="#ddd" stroke="#777"/>`),
        frame(hatch(["#d02020", "#0a8a0a", "#2020d0", "#d02020"])),
        frame(`<path d="M3 17 L8 12 L12 14 L17 8 L21 6" fill="none" stroke="#e03030" stroke-width="1.6"/>`),
        frame(`<path d="M7 5V19M12 4V20M18 3V17" stroke="#333"/><rect x="5" y="9" width="4" height="6" fill="#e02020"/><rect x="10" y="10" width="4" height="7" fill="#0a8a0a"/><rect x="16" y="6" width="4" height="7" fill="#e02020"/>`),
        `<svg width="26" height="24"><rect x="6" y="1" width="19" height="17" fill="#fff" stroke="#5b8fd9" stroke-width="1.4"/><rect x="1" y="5" width="19" height="18" fill="#fff" stroke="#5b8fd9" stroke-width="1.4"/><path d="M4 10h13M4 14h13M4 18h13" stroke="#666" stroke-width="2" stroke-dasharray="5 1"/></svg>`,
        frame(ftext("F10", 14, "#1c4fa0")),
        frame(`<rect x="4" y="4" width="8" height="5" fill="#f0c040" stroke="#c89020"/><rect x="12" y="10" width="8" height="4" fill="#f0c040" stroke="#c89020"/><rect x="12" y="16" width="8" height="4" fill="#f0c040" stroke="#c89020"/><path d="M7 9V18H12M7 12H12" fill="none" stroke="#c89020"/>`),
        frame(ftext("自", 18, "#e87820")),
        frame(ftext("F12", 14, "#1c4fa0")),
        `<svg width="24" height="24"><rect x="1" y="1" width="22" height="22" rx="5" fill="#fff" stroke="#3a9a9a" stroke-width="1.6"/><text x="12" y="17" text-anchor="middle" font-size="13" font-style="italic" fill="#1c4fa0">f(x)</text></svg>`,
        frame(`<circle cx="12" cy="12" r="6" fill="none" stroke="#1c4fa0" stroke-width="2"/>`),
        "sep",
        frame(`<path d="M3 9 q3 -4 6 0 t6 0 t6 0" fill="none" stroke="#e03030" stroke-width="1.3"/><path d="M3 16 q3 -4 6 0 t6 0 t6 0" fill="none" stroke="#2040d0" stroke-width="1.3"/>`),
        `<svg width="32" height="22"><text x="16" y="17" text-anchor="middle" font-size="15" font-weight="700" fill="#3a40c0">RSI</text></svg>`,
        `<svg width="22" height="30"><path d="M7 7 L11 2 L15 7Z" fill="#d03030"/><text x="11" y="25" text-anchor="middle" font-size="19" font-weight="700" fill="#c02020">S</text></svg>`,
        `<svg width="26" height="26"><path d="M13 1 L18 7 H15 V11 H19 V8 L25 13 L19 18 V15 H15 V19 H18 L13 25 L8 19 H11 V15 H7 V18 L1 13 L7 8 V11 H11 V7 H8Z" fill="#1040c0"/></svg>`,
        `<svg width="24" height="24"><path d="M4 16 L17 3 L22 8 L9 21 L2 23Z" fill="#e8a030" stroke="#a86810"/><path d="M17 3 L22 8 L20 10 L15 5Z" fill="#e0a0a0"/><path d="M2 23 L4 17 L8 21Z" fill="#444"/></svg>`,
        "sep",
        frame(ftext("F5", 15, "#1c4fa0")),
        `<svg width="26" height="22"><rect x="1" y="1" width="24" height="20" fill="#e8f4e8" stroke="#5b8fd9" stroke-width="1.4"/><path d="M6 9 a7 6 0 0 1 12 -1 l2 -2 v6 h-6 l2 -2 a5 4 0 0 0 -8 0Z" fill="#40b040"/><path d="M20 13 a7 6 0 0 1 -12 1 l-2 2 v-6 h6 l-2 2 a5 4 0 0 0 8 0Z" fill="#70c070"/></svg>`,
        "1", "5", "15", "30", "60", "*日", "周", "月", "N", "多", "季", "年"
    ];
    document.getElementById("sidebar").innerHTML = sideHtml.map((s) => {
        if (s === "sep") return `<div class="sidesep d-flex align-items-center justify-content-center"><i></i></div>`;
        if (s.startsWith("*")) return `<div class="sideitem sidecur d-flex align-items-center justify-content-center" >${s.slice(1)}</div>`;
        return `<div class="sideitem d-flex align-items-center justify-content-center">${s}</div>`;
    }).join("");
</script>
<script src="https://cdn.jsdelivr.net/npm/bootstrap@5.3.3/dist/js/bootstrap.bundle.min.js"></script>
</body>
</html>
